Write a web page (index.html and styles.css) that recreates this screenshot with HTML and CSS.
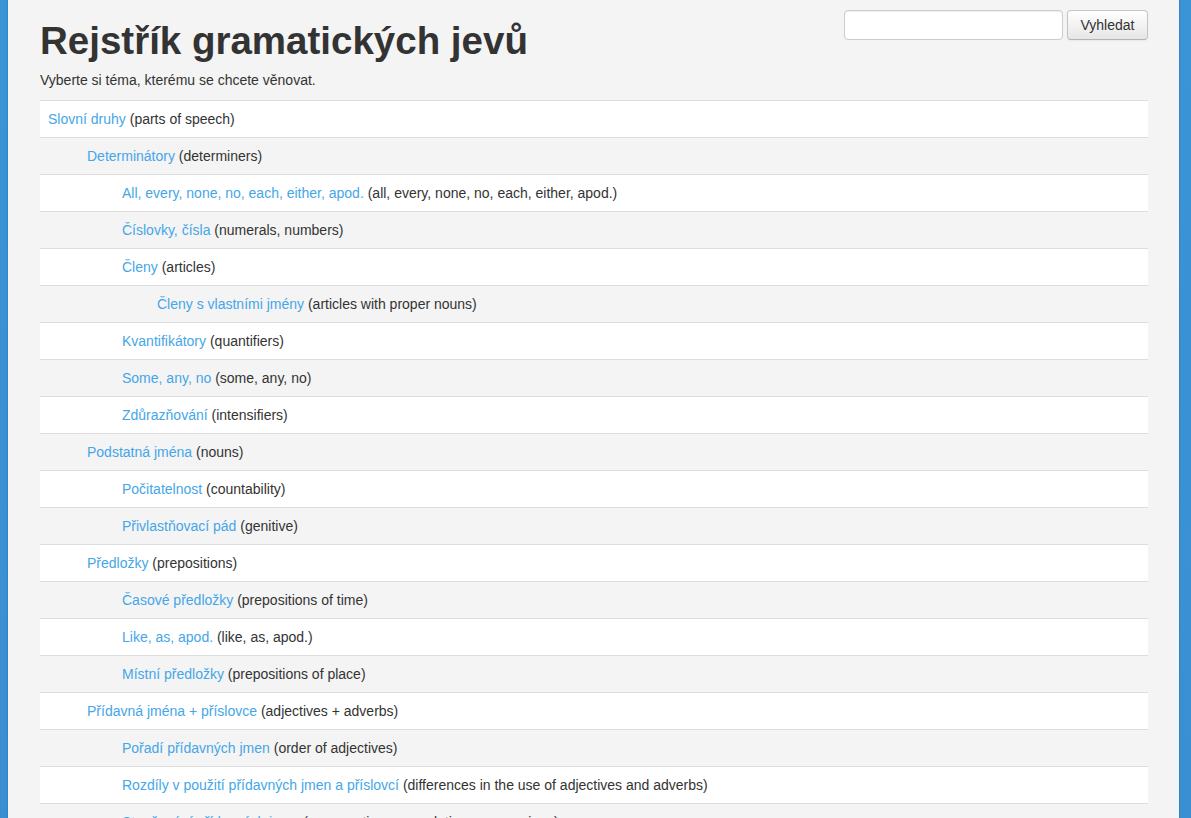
FILE: index.html
```html
<!DOCTYPE html>
<html lang="cs">
<head>
<meta charset="utf-8">
<title>Rejstřík gramatických jevů</title>
<link rel="stylesheet" href="styles.css">
</head>
<body>
<div class="page">
  <header class="header">
    <div class="titles">
      <h1>Rejstřík gramatických jevů</h1>
      <p class="lead">Vyberte si téma, kterému se chcete věnovat.</p>
    </div>
    <form class="search">
      <input type="text" class="search-input">
      <button type="button" class="btn">Vyhledat</button>
    </form>
  </header>
  <table class="index">
    <tbody>
      <tr><td class="l0"><a href="#">Slovní druhy</a> (parts of speech)</td></tr>
      <tr><td class="l1"><a href="#">Determinátory</a> (determiners)</td></tr>
      <tr><td class="l2"><a href="#">All, every, none, no, each, either, apod.</a> (all, every, none, no, each, either, apod.)</td></tr>
      <tr><td class="l2"><a href="#">Číslovky, čísla</a> (numerals, numbers)</td></tr>
      <tr><td class="l2"><a href="#">Členy</a> (articles)</td></tr>
      <tr><td class="l3"><a href="#">Členy s vlastními jmény</a> (articles with proper nouns)</td></tr>
      <tr><td class="l2"><a href="#">Kvantifikátory</a> (quantifiers)</td></tr>
      <tr><td class="l2"><a href="#">Some, any, no</a> (some, any, no)</td></tr>
      <tr><td class="l2"><a href="#">Zdůrazňování</a> (intensifiers)</td></tr>
      <tr><td class="l1"><a href="#">Podstatná jména</a> (nouns)</td></tr>
      <tr><td class="l2"><a href="#">Počitatelnost</a> (countability)</td></tr>
      <tr><td class="l2"><a href="#">Přivlastňovací pád</a> (genitive)</td></tr>
      <tr><td class="l1"><a href="#">Předložky</a> (prepositions)</td></tr>
      <tr><td class="l2"><a href="#">Časové předložky</a> (prepositions of time)</td></tr>
      <tr><td class="l2"><a href="#">Like, as, apod.</a> (like, as, apod.)</td></tr>
      <tr><td class="l2"><a href="#">Místní předložky</a> (prepositions of place)</td></tr>
      <tr><td class="l1"><a href="#">Přídavná jména + příslovce</a> (adjectives + adverbs)</td></tr>
      <tr><td class="l2"><a href="#">Pořadí přídavných jmen</a> (order of adjectives)</td></tr>
      <tr><td class="l2"><a href="#">Rozdíly v použití přídavných jmen a příslovcí</a> (differences in the use of adjectives and adverbs)</td></tr>
      <tr><td class="l2"><a href="#">Stupňování přídavných jmen</a> (comparatives, superlatives, comparison)</td></tr>
    </tbody>
  </table>
</div>
</body>
</html>
```

FILE: styles.css
```css
html, body {
  margin: 0;
  padding: 0;
}
body {
  background: linear-gradient(to bottom, #3a94d6, #3a8fd2);
  font-family: "Liberation Sans", Arial, sans-serif;
  font-size: 14px;
  line-height: 20px;
  color: #333333;
  overflow: hidden;
  height: 818px;
}
.page {
  margin-left: 8px;
  width: 1171px;
  min-height: 818px;
  box-sizing: border-box;
  padding: 10px 31px 0 32px;
  background: #f4f4f4;
  box-shadow: 0 0 2px rgba(0, 0, 0, 0.25);
}
.header {
  display: flex;
  justify-content: space-between;
  align-items: flex-start;
}
.titles h1 {
  margin: 9px 0 0 0;
  font-size: 38.5px;
  line-height: 44px;
  font-weight: bold;
  color: #333333;
}
.lead {
  margin: 7px 0 10px 0;
}
.search {
  display: flex;
  gap: 4px;
  margin: 0;
}
.search-input {
  width: 219px;
  height: 30px;
  box-sizing: border-box;
  border: 1px solid #cccccc;
  border-radius: 4px;
  background: #ffffff;
  box-shadow: inset 0 1px 1px rgba(0, 0, 0, 0.075);
  padding: 4px 6px;
  font: inherit;
}
.btn {
  width: 81px;
  height: 30px;
  box-sizing: border-box;
  border: 1px solid #c5c5c5;
  border-bottom-color: #b3b3b3;
  border-radius: 4px;
  background: linear-gradient(to bottom, #ffffff, #e6e6e6);
  box-shadow: inset 0 1px 0 rgba(255, 255, 255, 0.2), 0 1px 2px rgba(0, 0, 0, 0.05);
  font-family: "Liberation Sans", Arial, sans-serif;
  font-size: 14px;
  color: #333333;
  padding: 0 12px;
}
.index {
  width: 100%;
  border-collapse: collapse;
  border-spacing: 0;
}
.index td {
  border-top: 1px solid #dddddd;
  padding: 8px;
  line-height: 20px;
}
.index tr:nth-child(odd) td {
  background: #ffffff;
}
.index a {
  color: #45a6e8;
  text-decoration: none;
}
.index td.l1 { padding-left: 47px; }
.index td.l2 { padding-left: 82px; }
.index td.l3 { padding-left: 117px; }
```
